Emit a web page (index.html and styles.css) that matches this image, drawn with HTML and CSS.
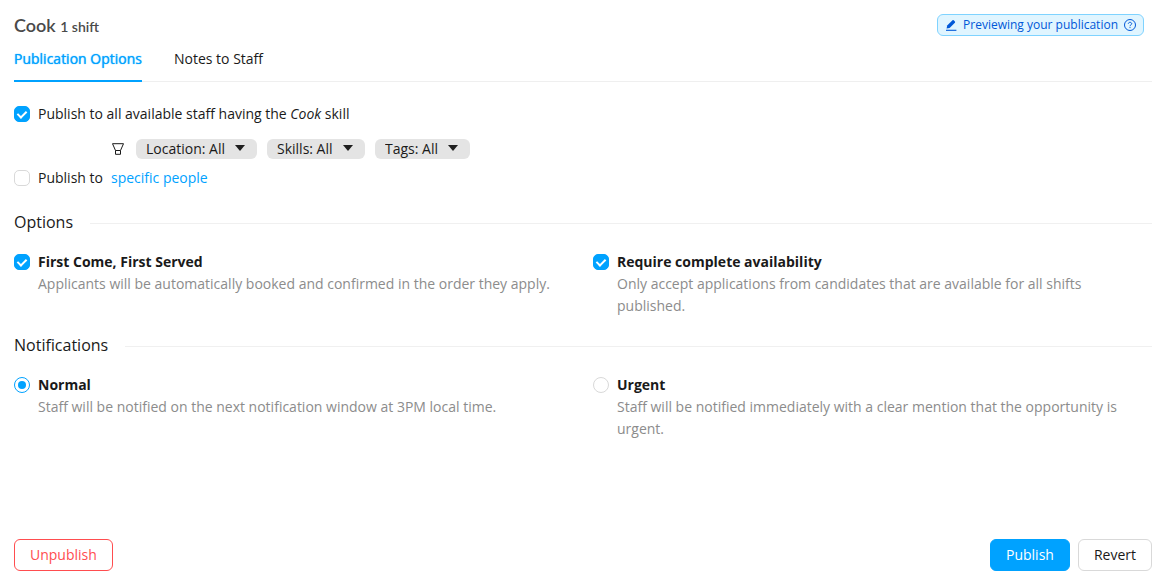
FILE: index.html
```html
<!DOCTYPE html>
<html lang="en">
<head>
<meta charset="utf-8">
<meta name="viewport" content="width=device-width, initial-scale=1">
<title>Publication Options</title>
<link rel="stylesheet" href="styles.css">
</head>
<body>
<form class="page">
  <header class="header">
    <h1 class="title">Cook <small class="title-count">1 shift</small></h1>
    <div class="tag">
      <svg class="tag-icon" viewBox="0 0 12 12" aria-hidden="true"><path d="M1 11.3h10.4" stroke="currentColor" stroke-width="1.1"/><path d="M1.6 9.6l.6-3L7.5 1.3q.6-.5 1.2 0l1.2 1.2q.5.6 0 1.2L4.6 9z" fill="currentColor"/></svg>
      <span>Previewing your publication</span>
      <svg class="tag-icon" viewBox="0 0 12 12" fill="none" stroke="currentColor" aria-hidden="true"><circle cx="6" cy="6" r="5.5"/><path d="M4.3 4.8c0-2 3.4-2 3.4 0C7.700 5.800 6 5.800 6 7.200"/><path d="M6 8.100v1"/></svg>
    </div>
  </header>

  <nav class="tabs" role="tablist">
    <button type="button" class="tab tab-active" role="tab" aria-selected="true">Publication Options</button>
    <button type="button" class="tab" role="tab" aria-selected="false">Notes to Staff</button>
  </nav>

  <section class="audience">
    <label class="choice"><input class="check" type="checkbox" checked><span>Publish to all available staff having the <em>Cook</em> skill</span></label>
    <div class="filters">
      <svg class="funnel" viewBox="0 0 12 12" fill="none" stroke="currentColor" aria-hidden="true"><path d="M.5 .7h11L8.500 7.500h-5z"/><path d="M3.500 7.500v3.800h5V7.500"/></svg>
      <span class="pill"><select class="pill-select" aria-label="Location"><option>Location: All</option></select></span>
      <span class="pill"><select class="pill-select" aria-label="Skills"><option>Skills: All</option></select></span>
      <span class="pill"><select class="pill-select" aria-label="Tags"><option>Tags: All</option></select></span>
    </div>
    <div class="choice">
      <input class="check" type="checkbox" id="specific"><label for="specific">Publish to</label>
      <a class="link" href="#people">specific people</a>
    </div>
  </section>

  <h2 class="divider">Options</h2>
  <div class="grid">
    <label class="choice"><input class="check" type="checkbox" checked>
      <span><strong class="name">First Come, First Served</strong><span class="desc">Applicants will be automatically booked and confirmed in the order they apply.</span></span></label>
    <label class="choice"><input class="check" type="checkbox" checked>
      <span><strong class="name">Require complete availability</strong><span class="desc">Only accept applications from candidates that are available for all shifts published.</span></span></label>
  </div>

  <h2 class="divider">Notifications</h2>
  <div class="grid">
    <label class="choice"><input class="radio" type="radio" name="notify" checked>
      <span><strong class="name">Normal</strong><span class="desc">Staff will be notified on the next notification window at 3PM local time.</span></span></label>
    <label class="choice"><input class="radio" type="radio" name="notify">
      <span><strong class="name">Urgent</strong><span class="desc">Staff will be notified immediately with a clear mention that the opportunity is urgent.</span></span></label>
  </div>

  <footer class="footer">
    <button type="button" class="btn btn-danger">Unpublish</button>
    <button type="submit" class="btn btn-primary">Publish</button>
    <button type="button" class="btn">Revert</button>
  </footer>
</form>
</body>
</html>
```
FILE: styles.css
```css
*,
*::before,
*::after {
  box-sizing: border-box;
}

body {
  margin: 0;
  background: #fff;
  color: #1a1a1a;
  font: 14px/22px "Open Sans", "Noto Sans", sans-serif;
}

.page {
  display: flex;
  flex-direction: column;
  min-height: 100vh;
  padding: 14px 15px 15px 14px;
}

.header {
  display: flex;
  align-items: center;
  justify-content: space-between;
  padding-right: 8px;
}

.title {
  margin: 0;
  color: #4a4a4a;
  font: 600 18px/20px Lato, sans-serif;
}

.title-count {
  font-size: 14px;
  line-height: 14px;
}

.tag {
  display: flex;
  align-items: center;
  gap: 6px;
  padding: 0 7px;
  border: 1px solid #7fd3ff;
  border-radius: 6px;
  background: #e0f5ff;
  color: #0058d8;
  font-size: 12px;
  line-height: 20px;
}

.tag-icon {
  width: 12px;
  height: 12px;
}

.tabs {
  display: flex;
  gap: 32px;
  box-shadow: inset 0 -1px #efefef;
}

.tab {
  height: 46px;
  padding: 2px 0 0;
  border: 0;
  border-bottom: 2px solid transparent;
  background: none;
  color: inherit;
  font: inherit;
}

.tab-active {
  border-color: #00a2ff;
  color: #00a2ff;
  text-shadow: 0 0 1px #00a2ff;
}

.audience {
  margin-top: 21px;
}

.choice {
  display: flex;
  align-items: flex-start;
  gap: 8px;
}

.check,
.radio {
  position: relative;
  flex: none;
  appearance: none;
  width: 16px;
  height: 16px;
  margin: 3px 0 0;
  border: 1px solid #d9d9d9;
  border-radius: 5px;
  background: #fff;
}

.check:checked {
  border-color: #00a2ff;
  background: #00a2ff;
}

.check:checked::after {
  content: "";
  position: absolute;
  top: 2px;
  left: 4px;
  width: 6px;
  height: 9px;
  border: solid #fff;
  border-width: 0 2px 2px 0;
  transform: rotate(45deg);
}

.radio {
  border-radius: 50%;
}

.radio:checked {
  border-color: #00a2ff;
}

.radio:checked::after {
  content: "";
  position: absolute;
  inset: 3px;
  border-radius: 50%;
  background: #00a2ff;
}

.filters {
  display: flex;
  align-items: center;
  gap: 10px;
  margin: 14px 0 8px 98px;
}

.funnel {
  width: 12px;
  height: 12px;
  margin-right: 2px;
}

.pill {
  display: flex;
  align-items: center;
  border-radius: 6px;
  background: #e4e4e4;
}

.pill::after {
  content: "";
  width: 10px;
  height: 6px;
  margin: 0 12px 2px -22px;
  background: #1f1f1f;
  clip-path: polygon(0 0, 100% 0, 50% 100%);
  pointer-events: none;
}

.pill-select {
  appearance: none;
  height: 20px;
  padding: 0 32px 0 10px;
  border: 0;
  background: none;
  color: inherit;
  font: inherit;
  line-height: 20px;
}

.link {
  color: #00a2ff;
  text-decoration: none;
}

.divider {
  display: flex;
  align-items: center;
  gap: 17px;
  margin: 21px 0 17px;
  font-size: 16px;
  font-weight: 500;
  line-height: 24px;
}

.divider::after {
  content: "";
  flex: 1;
  height: 1px;
  margin-top: 2px;
  background: #f0f0f0;
}

.grid {
  display: grid;
  grid-template-columns: 1fr 1fr;
  column-gap: 20px;
}

.grid + .divider {
  margin-top: 16px;
}

.name,
.desc {
  display: block;
}

.name {
  font-weight: 700;
}

.desc {
  color: #8c8c8c;
}

.footer {
  display: flex;
  gap: 8px;
  margin-top: auto;
}

.btn {
  height: 32px;
  padding: 0 15px;
  border: 1px solid #d9d9d9;
  border-radius: 6px;
  background: #fff;
  color: inherit;
  font: inherit;
}

.btn-danger {
  margin-right: auto;
  border-color: #ff4d4f;
  color: #ff4d4f;
}

.btn-primary {
  border-color: #00a2ff;
  background: #00a2ff;
  color: #fff;
}
```
